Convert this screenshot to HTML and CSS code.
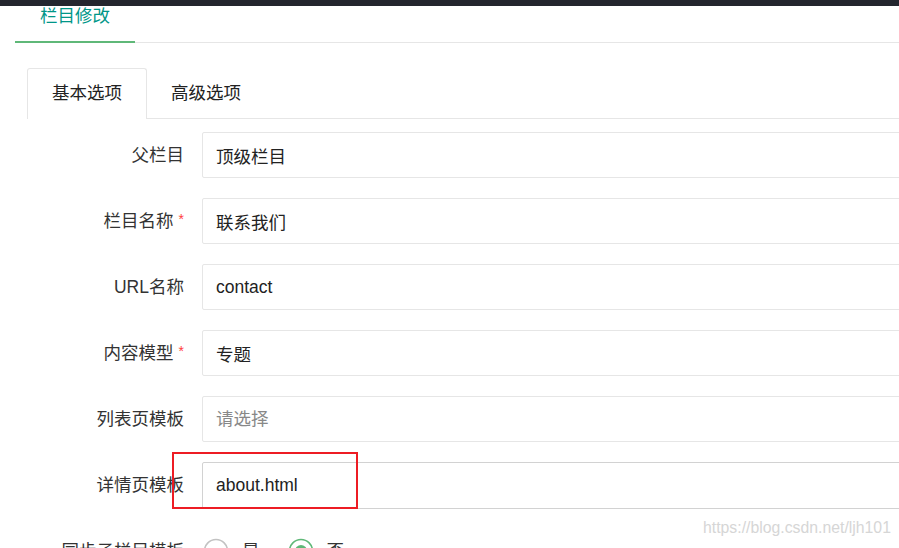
FILE: index.html
```html
<!DOCTYPE html>
<html lang="zh">
<head>
<meta charset="utf-8">
<title>栏目修改</title>
<link rel="stylesheet" href="styles.css">
</head>
<body>
<div class="topbar"></div>
<div class="page">
  <ul class="page-tabs">
    <li class="page-tab active">栏目修改</li>
  </ul>

  <ul class="tabs">
    <li class="tab active">基本选项</li>
    <li class="tab">高级选项</li>
  </ul>

  <form class="form">
    <div class="row">
      <label class="label">父栏目</label>
      <input class="input" type="text" value="顶级栏目">
    </div>
    <div class="row">
      <label class="label">栏目名称<span class="req">*</span></label>
      <input class="input" type="text" value="联系我们">
    </div>
    <div class="row">
      <label class="label">URL名称</label>
      <input class="input" type="text" value="contact">
    </div>
    <div class="row">
      <label class="label">内容模型<span class="req">*</span></label>
      <input class="input" type="text" value="专题">
    </div>
    <div class="row">
      <label class="label">列表页模板</label>
      <input class="input" type="text" placeholder="请选择">
    </div>
    <div class="row">
      <label class="label">详情页模板</label>
      <input class="input input-hover" type="text" value="about.html">
    </div>
    <div class="row">
      <label class="label">同步子栏目模板</label>
      <div class="radios">
        <span class="radio">
          <svg class="radio-icon" viewBox="0 0 26 26" width="26" height="26"><circle cx="13" cy="13" r="11.5" fill="none" stroke="#c2c2c2" stroke-width="1.6"/></svg>
          <span class="radio-text">是</span>
        </span>
        <span class="radio">
          <svg class="radio-icon" viewBox="0 0 26 26" width="26" height="26"><circle cx="13" cy="13" r="11.5" fill="none" stroke="#5fb878" stroke-width="1.6"/><circle cx="13" cy="13" r="6" fill="#5fb878"/></svg>
          <span class="radio-text">否</span>
        </span>
      </div>
    </div>
  </form>
</div>

<div class="annotation"></div>
<div class="watermark">https://blog.csdn.net/ljh101</div>
</body>
</html>
```

FILE: styles.css
```css
html, body {
  margin: 0;
  padding: 0;
  background: #fff;
  overflow: hidden;
  width: 899px;
  height: 548px;
}

body {
  position: relative;
  font-family: "Liberation Sans", "Noto Sans CJK SC", Arial, sans-serif;
  color: #333;
  font-size: 17.5px;
}

.topbar {
  height: 6px;
  background: #23262e;
}

.page {
  padding-left: 15px;
}

.page-tabs {
  list-style: none;
  margin: 0;
  padding: 0;
  display: flex;
  border-bottom: 1px solid #e6e6e6;
}

.page-tab {
  height: 21px;
  line-height: 21px;
  padding: 0 25px 14px 25px;
  margin-bottom: -1px;
  color: #009688;
  font-size: 17.5px;
}

.page-tab.active {
  border-bottom: 2px solid #5fb878;
}

.tabs {
  list-style: none;
  margin: 25px 0 0 12px;
  padding: 0;
  display: flex;
  height: 50px;
  border-bottom: 1px solid #e6e6e6;
}

.tab {
  box-sizing: border-box;
  height: 51px;
  line-height: 49px;
  padding: 0 24px;
  margin-bottom: -1px;
  color: #222;
  border: 1px solid transparent;
  border-bottom: none;
}

.tab + .tab {
  padding-left: 23px;
}

.tab.active {
  background: #fff;
  border-color: #e6e6e6;
  border-radius: 3px 3px 0 0;
}

.form {
  margin: 13px 0 0 0;
  width: 1100px;
}

.row {
  display: flex;
  align-items: center;
  height: 46px;
  margin-bottom: 20px;
}

.label {
  width: 169px;
  flex: none;
  text-align: right;
  color: #333;
  line-height: 24px;
  margin-right: 18px;
  white-space: nowrap;
}

.req {
  color: #ff3d3d;
  font-size: 14px;
  margin-left: 5px;
  position: relative;
  top: -3px;
}

.input {
  flex: 1;
  box-sizing: border-box;
  height: 46px;
  margin: 0;
  padding: 0 13px;
  border: 1px solid #e6e6e6;
  border-radius: 2px;
  background: #fff;
  color: #222;
  font-family: "Liberation Sans", "Noto Sans CJK SC", Arial, sans-serif;
  font-size: 17.5px;
  outline: none;
}

.input::placeholder {
  color: #888;
}

.input-hover {
  border-color: #d2d2d2;
  height: 47px;
  margin-top: 1px;
}

.radios {
  display: flex;
  align-items: center;
  margin-left: 1px;
}

.radio {
  display: inline-flex;
  align-items: center;
  margin-right: 28px;
}

.radio-icon {
  display: block;
  margin-right: 13px;
}

.radio-text {
  line-height: 24px;
}

.annotation {
  position: absolute;
  left: 172px;
  top: 452px;
  width: 182px;
  height: 53px;
  border: 2px solid #ed1c24;
}

.watermark {
  position: absolute;
  left: 703px;
  top: 519px;
  font-family: "Liberation Sans", Arial, sans-serif;
  font-size: 15.8px;
  color: #d6d6d6;
  white-space: nowrap;
}
```
